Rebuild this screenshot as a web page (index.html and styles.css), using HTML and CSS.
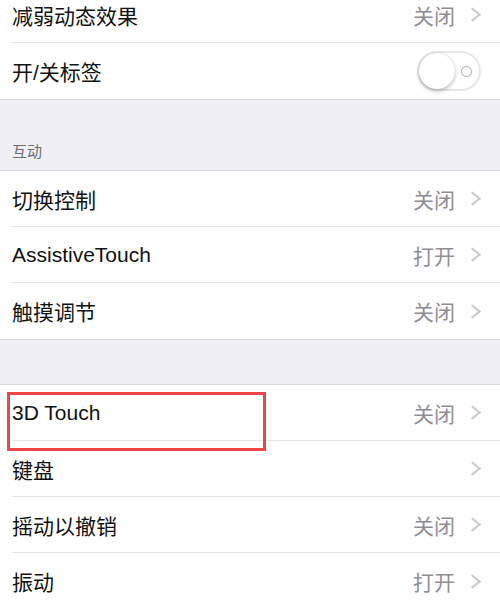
FILE: index.html
```html
<!DOCTYPE html>
<html lang="zh-CN">
<head>
    <meta charset="UTF-8">
    <meta name="viewport" content="width=device-width, initial-scale=1.0">
    <title>辅助功能</title>
    <link rel="stylesheet" href="styles.css">
</head>
<body>
    <div class="settings">
        <div class="group">
            <div class="row">
                <span class="label">减弱动态效果</span>
                <span class="value">关闭</span>
                <span class="chevron"></span>
            </div>
            <div class="row">
                <span class="label">开/关标签</span>
                <span class="toggle"><span class="knob"></span><span class="off-mark"></span></span>
            </div>
        </div>

        <div class="section-header">互动</div>

        <div class="group">
            <div class="row">
                <span class="label">切换控制</span>
                <span class="value">关闭</span>
                <span class="chevron"></span>
            </div>
            <div class="row">
                <span class="label">AssistiveTouch</span>
                <span class="value">打开</span>
                <span class="chevron"></span>
            </div>
            <div class="row">
                <span class="label">触摸调节</span>
                <span class="value">关闭</span>
                <span class="chevron"></span>
            </div>
        </div>

        <div class="spacer"></div>

        <div class="group">
            <div class="row highlighted">
                <span class="label">3D Touch</span>
                <span class="value">关闭</span>
                <span class="chevron"></span>
                <span class="mark-box"></span>
            </div>
            <div class="row">
                <span class="label">键盘</span>
                <span class="chevron"></span>
            </div>
            <div class="row">
                <span class="label">摇动以撤销</span>
                <span class="value">关闭</span>
                <span class="chevron"></span>
            </div>
            <div class="row">
                <span class="label">振动</span>
                <span class="value">打开</span>
                <span class="chevron"></span>
            </div>
        </div>
    </div>
</body>
</html>
```

FILE: styles.css
```css
body {
    margin: 0;
    background-color: #efeff4;
    font-family: "Liberation Sans", "Noto Sans CJK SC", sans-serif;
    overflow: hidden;
}
.settings {
    margin-top: -13px;
}
.group {
    background-color: white;
    border-top: 1px solid #d6d6db;
    border-bottom: 1px solid #d6d6db;
}
.group:first-child {
    border-top: none;
}
.row {
    position: relative;
    display: flex;
    align-items: center;
    height: 56px;
    margin-left: 12px;
    padding-right: 20px;
    border-bottom: 1px solid #e3e3e8;
    box-sizing: border-box;
}
.row:last-child {
    border-bottom: none;
}
.label {
    flex: 1;
    font-size: 21px;
    color: #111;
}
.value {
    font-size: 21px;
    color: #8e8e93;
    margin-right: 12px;
}
.chevron {
    width: 9px;
    height: 9px;
    border-top: 2px solid #c7c7cc;
    border-right: 2px solid #c7c7cc;
    transform: rotate(45deg) skew(-6deg, -6deg);
    margin-right: 2px;
}
.section-header {
    height: 70px;
    display: flex;
    align-items: flex-end;
    padding: 0 0 9px 12px;
    box-sizing: border-box;
    font-size: 15px;
    color: #6d6d72;
}
.spacer {
    height: 44px;
}
.toggle {
    position: relative;
    width: 64px;
    height: 40px;
    border: 2px solid #e6e6eb;
    border-radius: 22px;
    box-sizing: border-box;
    background-color: white;
    margin-right: -1px;
}
.knob {
    position: absolute;
    left: 0;
    top: 0;
    width: 36px;
    height: 36px;
    border-radius: 50%;
    background-color: white;
    box-shadow: 0 2px 4px rgba(0,0,0,0.25), 0 0 1px rgba(0,0,0,0.2);
}
.off-mark {
    position: absolute;
    left: 42px;
    top: 13px;
    width: 11px;
    height: 11px;
    border: 1.5px solid #a8a8ad;
    border-radius: 50%;
    box-sizing: border-box;
}
.mark-box {
    position: absolute;
    left: -5px;
    top: 7px;
    width: 259px;
    height: 59px;
    border: 3px solid #ee454b;
    box-sizing: border-box;
}
```
